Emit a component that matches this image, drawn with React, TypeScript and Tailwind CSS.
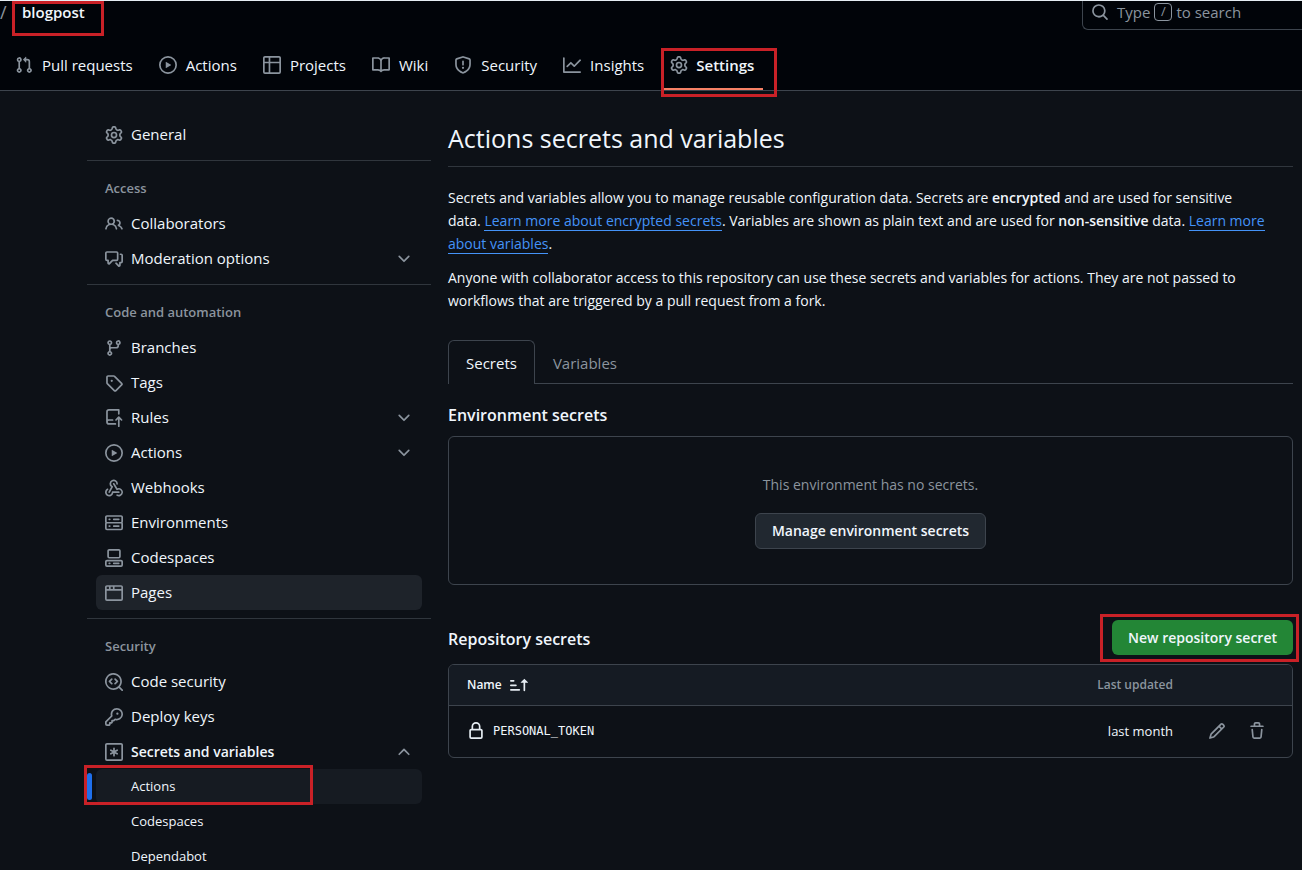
import React from 'react';

const icons = {
  pullRequest: 'M1.5 3.25a2.25 2.25 0 1 1 3 2.122v5.256a2.251 2.251 0 1 1-1.5 0V5.372A2.25 2.25 0 0 1 1.5 3.25Zm5.677-.177L9.573.677A.25.25 0 0 1 10 .854V2.5h1A2.5 2.5 0 0 1 13.5 5v5.628a2.251 2.251 0 1 1-1.5 0V5a1 1 0 0 0-1-1h-1v1.646a.25.25 0 0 1-.427.177L7.177 3.427a.25.25 0 0 1 0-.354ZM3.75 2.5a.75.75 0 1 0 0 1.5.75.75 0 0 0 0-1.5Zm0 9.5a.75.75 0 1 0 0 1.5.75.75 0 0 0 0-1.5Zm8.25.75a.75.75 0 1 0 1.5 0 .75.75 0 0 0-1.5 0Z',
  play: 'M8 0a8 8 0 1 1 0 16A8 8 0 0 1 8 0ZM1.5 8a6.5 6.5 0 1 0 13 0 6.5 6.5 0 0 0-13 0Zm4.879-2.773 4.264 2.559a.25.25 0 0 1 0 .428l-4.264 2.559A.25.25 0 0 1 6 10.559V5.442a.25.25 0 0 1 .379-.215Z',
  table: 'M0 1.75C0 .784.784 0 1.75 0h12.5C15.216 0 16 .784 16 1.75v12.5A1.75 1.75 0 0 1 14.25 16H1.75A1.75 1.75 0 0 1 0 14.25ZM6.5 6.5v8h7.75a.25.25 0 0 0 .25-.25V6.5Zm8-1.5V1.75a.25.25 0 0 0-.25-.25H6.5V5Zm-13 1.5v7.75c0 .138.112.25.25.25H5v-8ZM5 5V1.5H1.75a.25.25 0 0 0-.25.25V5Z',
  book: 'M0 1.75A.75.75 0 0 1 .75 1h4.253c1.227 0 2.317.59 3 1.501A3.743 3.743 0 0 1 11.006 1h4.245a.75.75 0 0 1 .75.75v10.5a.75.75 0 0 1-.75.75h-4.507a2.25 2.25 0 0 0-1.591.659l-.622.621a.75.75 0 0 1-1.06 0l-.622-.621A2.25 2.25 0 0 0 5.258 13H.75a.75.75 0 0 1-.75-.75Zm7.251 10.324.004-5.073-.002-2.253A2.25 2.25 0 0 0 5.003 2.5H1.5v9h3.757a3.75 3.75 0 0 1 1.994.574ZM8.755 4.75l-.004 7.322a3.752 3.752 0 0 1 1.992-.572H14.5v-9h-3.495a2.25 2.25 0 0 0-2.25 2.25Z',
  shield: 'M7.467.133a1.748 1.748 0 0 1 1.066 0l5.25 1.68A1.75 1.75 0 0 1 15 3.48V7c0 1.566-.32 3.182-1.303 4.682-.983 1.498-2.585 2.813-5.032 3.855a1.697 1.697 0 0 1-1.33 0c-2.447-1.042-4.049-2.357-5.032-3.855C1.32 10.182 1 8.566 1 7V3.48a1.75 1.75 0 0 1 1.217-1.667Zm.61 1.429a.25.25 0 0 0-.153 0l-5.25 1.68a.25.25 0 0 0-.174.238V7c0 1.358.275 2.666 1.057 3.86.784 1.194 2.121 2.34 4.366 3.297a.196.196 0 0 0 .154 0c2.245-.956 3.582-2.104 4.366-3.298C13.225 9.666 13.5 8.36 13.5 7V3.48a.251.251 0 0 0-.174-.237l-5.25-1.68ZM8.75 4.75v3a.75.75 0 0 1-1.5 0v-3a.75.75 0 0 1 1.5 0ZM9 10.5a1 1 0 1 1-2 0 1 1 0 0 1 2 0Z',
  graph: 'M1.5 1.75V13.5h13.75a.75.75 0 0 1 0 1.5H.75a.75.75 0 0 1-.75-.75V1.75a.75.75 0 0 1 1.5 0Zm14.28 2.53-5.25 5.25a.75.75 0 0 1-1.06 0L7 7.06 4.28 9.78a.751.751 0 0 1-1.042-.018.751.751 0 0 1-.018-1.042l3.25-3.25a.75.75 0 0 1 1.06 0L10 7.94l4.72-4.72a.751.751 0 0 1 1.042.018.751.751 0 0 1 .018 1.042Z',
  gear: 'M8 0a8.2 8.2 0 0 1 .701.031C9.444.095 9.99.645 10.16 1.29l.288 1.107c.018.066.079.158.212.224.231.114.454.243.668.386.123.082.233.09.299.071l1.103-.303c.644-.176 1.392.021 1.82.63.27.385.506.792.704 1.218.315.675.111 1.422-.364 1.891l-.814.806c-.049.048-.098.147-.088.294.016.257.016.515 0 .772-.01.147.038.246.088.294l.814.806c.475.469.679 1.216.364 1.891a7.977 7.977 0 0 1-.704 1.217c-.428.61-1.176.807-1.82.63l-1.102-.302c-.067-.019-.177-.011-.3.071a5.909 5.909 0 0 1-.668.386c-.133.066-.194.158-.211.224l-.29 1.106c-.168.646-.715 1.196-1.458 1.26a8.006 8.006 0 0 1-1.402 0c-.743-.064-1.289-.614-1.458-1.26l-.289-1.106c-.018-.066-.079-.158-.212-.224a5.738 5.738 0 0 1-.668-.386c-.123-.082-.233-.09-.299-.071l-1.103.303c-.644.176-1.392-.021-1.82-.63a8.12 8.12 0 0 1-.704-1.218c-.315-.675-.111-1.422.363-1.891l.815-.806c.05-.048.098-.147.088-.294a6.214 6.214 0 0 1 0-.772c.01-.147-.038-.246-.088-.294l-.815-.806C.635 6.045.431 5.298.746 4.623a7.92 7.92 0 0 1 .704-1.217c.428-.61 1.176-.807 1.82-.63l1.102.302c.067.019.177.011.3-.071.214-.143.437-.272.668-.386.133-.066.194-.158.211-.224l.29-1.106C6.009.645 6.556.095 7.299.03 7.53.01 7.764 0 8 0Zm-.571 1.525c-.036.003-.108.036-.137.146l-.289 1.105c-.147.561-.549.967-.998 1.189-.173.086-.34.183-.5.29-.417.278-.97.423-1.529.27l-1.103-.303c-.109-.03-.175.016-.195.045-.22.312-.412.644-.573.99-.014.031-.021.11.059.19l.815.806c.411.406.562.957.53 1.456a4.709 4.709 0 0 0 0 .582c.032.499-.119 1.05-.53 1.456l-.815.806c-.081.08-.073.159-.059.19.162.346.353.677.573.989.02.03.085.076.195.046l1.102-.303c.56-.153 1.113-.008 1.53.27.161.107.328.204.501.29.447.222.85.629.997 1.189l.289 1.105c.029.109.101.143.137.146a6.6 6.6 0 0 0 1.142 0c.036-.003.108-.036.137-.146l.289-1.105c.147-.561.549-.967.998-1.189.173-.086.34-.183.5-.29.417-.278.97-.423 1.529-.27l1.103.303c.109.029.175-.016.195-.045.22-.313.411-.644.573-.99.014-.031.021-.11-.059-.19l-.815-.806c-.411-.406-.562-.957-.53-1.456a4.709 4.709 0 0 0 0-.582c-.032-.499.119-1.05.53-1.456l.815-.806c.081-.08.073-.159.059-.19a6.464 6.464 0 0 0-.573-.989c-.02-.03-.085-.076-.195-.046l-1.102.303c-.56.153-1.113.008-1.53-.27a4.44 4.44 0 0 0-.501-.29c-.447-.222-.85-.629-.997-1.189l-.289-1.105c-.029-.11-.101-.143-.137-.146a6.6 6.6 0 0 0-1.142 0ZM11 8a3 3 0 1 1-6 0 3 3 0 0 1 6 0ZM9.5 8a1.5 1.5 0 1 0-3.001.001A1.5 1.5 0 0 0 9.5 8Z',
  people: 'M2 5.5a3.5 3.5 0 1 1 5.898 2.549 5.508 5.508 0 0 1 3.034 4.084.75.75 0 1 1-1.482.235 4 4 0 0 0-7.9 0 .75.75 0 0 1-1.482-.236A5.507 5.507 0 0 1 3.102 8.05 3.493 3.493 0 0 1 2 5.5ZM11 4a3.001 3.001 0 0 1 2.22 5.018 5.01 5.01 0 0 1 2.56 3.012.749.749 0 0 1-.885.954.752.752 0 0 1-.549-.514 3.507 3.507 0 0 0-2.522-2.372.75.75 0 0 1-.574-.73v-.352a.75.75 0 0 1 .416-.672A1.5 1.5 0 0 0 11 5.5.75.75 0 0 1 11 4Zm-5.5-.5a2 2 0 1 0-.001 3.999A2 2 0 0 0 5.5 3.5Z',
  discussion: 'M1.75 1h8.5c.966 0 1.75.784 1.75 1.75v5.5A1.75 1.75 0 0 1 10.25 10H7.061l-2.574 2.573A1.458 1.458 0 0 1 2 11.543V10h-.25A1.75 1.75 0 0 1 0 8.25v-5.5C0 1.784.784 1 1.75 1ZM1.5 2.75v5.5c0 .138.112.25.25.25h1a.75.75 0 0 1 .75.75v2.19l2.72-2.72a.749.749 0 0 1 .53-.22h3.5a.25.25 0 0 0 .25-.25v-5.5a.25.25 0 0 0-.25-.25h-8.5a.25.25 0 0 0-.25.25Zm13 2a.25.25 0 0 0-.25-.25h-.5a.75.75 0 0 1 0-1.5h.5c.966 0 1.75.784 1.75 1.75v5.5A1.75 1.75 0 0 1 14.25 12H14v1.543a1.458 1.458 0 0 1-2.487 1.03L9.22 12.28a.749.749 0 0 1 .326-1.275.749.749 0 0 1 .734.215l2.22 2.22v-2.19a.75.75 0 0 1 .75-.75h1a.25.25 0 0 0 .25-.25Z',
  branch: 'M9.5 3.25a2.25 2.25 0 1 1 3 2.122V6A2.5 2.5 0 0 1 10 8.5H6a1 1 0 0 0-1 1v1.128a2.251 2.251 0 1 1-1.5 0V5.372a2.25 2.25 0 1 1 1.5 0v1.836A2.493 2.493 0 0 1 6 7h4a1 1 0 0 0 1-1v-.628A2.25 2.25 0 0 1 9.5 3.25Zm-6 0a.75.75 0 1 0 1.5 0 .75.75 0 0 0-1.5 0Zm8.25-.75a.75.75 0 1 0 0 1.5.75.75 0 0 0 0-1.5ZM4.25 12a.75.75 0 1 0 0 1.5.75.75 0 0 0 0-1.5Z',
  tag: 'M1 7.775V2.75C1 1.784 1.784 1 2.75 1h5.025c.464 0 .91.184 1.238.513l6.25 6.25a1.75 1.75 0 0 1 0 2.474l-5.026 5.026a1.75 1.75 0 0 1-2.474 0l-6.25-6.25A1.752 1.752 0 0 1 1 7.775Zm1.5 0c0 .066.026.13.073.177l6.25 6.25a.25.25 0 0 0 .354 0l5.025-5.025a.25.25 0 0 0 0-.354l-6.25-6.25a.25.25 0 0 0-.177-.073H2.75a.25.25 0 0 0-.25.25ZM6 5a1 1 0 1 1 0 2 1 1 0 0 1 0-2Z',
  rules: 'M1 2.5A2.5 2.5 0 0 1 3.5 0h8.75a.75.75 0 0 1 .75.75v3.5a.75.75 0 0 1-1.5 0V1.5h-8a1 1 0 0 0-1 1v6.708A2.493 2.493 0 0 1 3.5 9h3.25a.75.75 0 0 1 0 1.5H3.5a1 1 0 0 0 0 2h5.75a.75.75 0 0 1 0 1.5H3.5A2.5 2.5 0 0 1 1 11.5Zm13.23 7.79h-.001l-1.224-1.224v6.184a.75.75 0 0 1-1.5 0V9.066L10.28 10.29a.75.75 0 0 1-1.06-1.061l2.505-2.504a.75.75 0 0 1 1.06 0L15.29 9.23a.751.751 0 0 1-.018 1.042.751.751 0 0 1-1.042.018Z',
  webhook: 'M5.5 4.25a2.25 2.25 0 0 1 4.5 0 .75.75 0 0 0 1.5 0 3.75 3.75 0 1 0-6.14 2.889l-2.272 4.258a.75.75 0 0 0 1.324.706L7 7.25a.75.75 0 0 0-.309-1.015A2.25 2.25 0 0 1 5.5 4.25ZM7.364 3.607a.75.75 0 0 1 1.03.257l2.608 4.349a3.75 3.75 0 1 1-.628 6.785.75.75 0 0 1 .752-1.299 2.25 2.25 0 1 0-.033-3.88.75.75 0 0 1-1.03-.256L7.107 4.636a.75.75 0 0 1 .257-1.03ZM2.9 8.776A.75.75 0 0 1 2.625 9.8 2.25 2.25 0 1 0 6 11.75a.75.75 0 0 1 .75-.751h5.5a.75.75 0 0 1 0 1.5H7.425a3.751 3.751 0 1 1-5.55-3.998.75.75 0 0 1 1.024.274Z',
  server: 'M1.75 1h12.5c.966 0 1.75.784 1.75 1.75v4c0 .372-.116.717-.314 1 .198.283.314.628.314 1v4a1.75 1.75 0 0 1-1.75 1.75H1.75A1.75 1.75 0 0 1 0 12.75v-4c0-.358.109-.707.314-1a1.739 1.739 0 0 1-.314-1v-4C0 1.784.784 1 1.75 1ZM1.5 2.75v4c0 .138.112.25.25.25h12.5a.25.25 0 0 0 .25-.25v-4a.25.25 0 0 0-.25-.25H1.75a.25.25 0 0 0-.25.25Zm.25 5.75a.25.25 0 0 0-.25.25v4c0 .138.112.25.25.25h12.5a.25.25 0 0 0 .25-.25v-4a.25.25 0 0 0-.25-.25ZM7 4.75A.75.75 0 0 1 7.75 4h4.5a.75.75 0 0 1 0 1.5h-4.5A.75.75 0 0 1 7 4.75ZM7.75 10h4.5a.75.75 0 0 1 0 1.5h-4.5a.75.75 0 0 1 0-1.5ZM3 4.75A.75.75 0 0 1 3.75 4h.5a.75.75 0 0 1 0 1.5h-.5A.75.75 0 0 1 3 4.75ZM3.75 10h.5a.75.75 0 0 1 0 1.5h-.5a.75.75 0 0 1 0-1.5Z',
  codespaces: 'M0 11.25c0-.966.784-1.75 1.75-1.75h12.5c.966 0 1.75.784 1.75 1.75v3A1.75 1.75 0 0 1 14.25 16H1.75A1.75 1.75 0 0 1 0 14.25Zm2-9.5C2 .784 2.784 0 3.75 0h8.5C13.216 0 14 .784 14 1.75v5a1.75 1.75 0 0 1-1.75 1.75h-8.5A1.75 1.75 0 0 1 2 6.75Zm1.75-.25a.25.25 0 0 0-.25.25v5c0 .138.112.25.25.25h8.5a.25.25 0 0 0 .25-.25v-5a.25.25 0 0 0-.25-.25Zm-2 9.5a.25.25 0 0 0-.25.25v3c0 .138.112.25.25.25h12.5a.25.25 0 0 0 .25-.25v-3a.25.25 0 0 0-.25-.25ZM7 12.75a.75.75 0 0 1 .75-.75h4.5a.75.75 0 0 1 0 1.5h-4.5a.75.75 0 0 1-.75-.75Zm-4 0a.75.75 0 0 1 .75-.75h.5a.75.75 0 0 1 0 1.5h-.5a.75.75 0 0 1-.75-.75Z',
  browser: 'M0 2.75C0 1.784.784 1 1.75 1h12.5c.966 0 1.75.784 1.75 1.75v10.5A1.75 1.75 0 0 1 14.25 15H1.75A1.75 1.75 0 0 1 0 13.25ZM14.5 6h-13v7.25c0 .138.112.25.25.25h12.5a.25.25 0 0 0 .25-.25Zm-6-3.5v2h6V2.75a.25.25 0 0 0-.25-.25ZM5 2.5v2h2v-2Zm-3.25 0a.25.25 0 0 0-.25.25V4.5h2v-2Z',
  codescan: 'M8.47 4.97a.75.75 0 0 0 0 1.06L9.94 7.5 8.47 8.97a.75.75 0 1 0 1.06 1.06l2-2a.75.75 0 0 0 0-1.06l-2-2a.75.75 0 0 0-1.06 0ZM6.53 6.03a.75.75 0 0 0-1.06-1.06l-2 2a.75.75 0 0 0 0 1.06l2 2a.75.75 0 1 0 1.06-1.06L5.06 7.5l1.47-1.47ZM12.246 13.307a7.501 7.501 0 1 1 1.06-1.06l2.474 2.473a.749.749 0 0 1-.326 1.275.749.749 0 0 1-.734-.215ZM1.5 7.5a6.002 6.002 0 0 0 3.608 5.504 6.002 6.002 0 0 0 6.486-1.117.748.748 0 0 1 .292-.293A6 6 0 1 0 1.5 7.5Z',
  key: 'M10.5 0a5.499 5.499 0 1 1-1.288 10.848l-.932.932a.749.749 0 0 1-.53.22H7v.75a.749.749 0 0 1-.22.53l-.5.5a.749.749 0 0 1-.53.22H5v.75a.749.749 0 0 1-.22.53l-.5.5a.749.749 0 0 1-.53.22h-2A1.75 1.75 0 0 1 0 14.25v-2c0-.199.079-.389.22-.53l4.932-4.932A5.5 5.5 0 0 1 10.5 0Zm-4 5.5c-.001.431.069.86.205 1.269a.75.75 0 0 1-.181.768L1.5 12.56v1.69c0 .138.112.25.25.25h1.69l.06-.06v-1.19a.75.75 0 0 1 .75-.75h1.19l.06-.06v-1.19a.75.75 0 0 1 .75-.75h1.19l1.023-1.025a.75.75 0 0 1 .768-.18A4 4 0 1 0 6.5 5.5ZM11 6a1 1 0 1 1 0-2 1 1 0 0 1 0 2Z',
  asterisk: 'M0 1.75C0 .784.784 0 1.75 0h12.5C15.216 0 16 .784 16 1.75v12.5A1.75 1.75 0 0 1 14.25 16H1.75A1.75 1.75 0 0 1 0 14.25Zm1.75-.25a.25.25 0 0 0-.25.25v12.5c0 .138.112.25.25.25h12.5a.25.25 0 0 0 .25-.25V1.75a.25.25 0 0 0-.25-.25ZM8 4a.75.75 0 0 1 .75.75V6.7l1.69-.975a.75.75 0 0 1 .75 1.3L9.5 8l1.69.975a.75.75 0 0 1-.75 1.3L8.75 9.3v1.95a.75.75 0 0 1-1.5 0V9.3l-1.69.975a.75.75 0 0 1-.75-1.3L6.5 8l-1.69-.975a.75.75 0 0 1 .75-1.3l1.69.975V4.75A.75.75 0 0 1 8 4Z',
  chevronDown: 'M12.78 5.22a.749.749 0 0 1 0 1.06l-4.25 4.25a.749.749 0 0 1-1.06 0L3.22 6.28a.749.749 0 1 1 1.06-1.06L8 8.939l3.72-3.719a.749.749 0 0 1 1.06 0Z',
  chevronUp: 'M3.22 10.53a.749.749 0 0 1 0-1.06l4.25-4.25a.749.749 0 0 1 1.06 0l4.25 4.25a.749.749 0 1 1-1.06 1.06L8 6.811 4.28 10.53a.749.749 0 0 1-1.06 0Z',
  sortAsc: 'm12.927 2.573 3 3A.25.25 0 0 1 15.75 6H13.5v6.75a.75.75 0 0 1-1.5 0V6H9.75a.25.25 0 0 1-.177-.427l3-3a.25.25 0 0 1 .354 0ZM0 12.25a.75.75 0 0 1 .75-.75h7.5a.75.75 0 0 1 0 1.5H.75a.75.75 0 0 1-.75-.75Zm0-4a.75.75 0 0 1 .75-.75h4.5a.75.75 0 0 1 0 1.5H.75A.75.75 0 0 1 0 8.25Zm0-4a.75.75 0 0 1 .75-.75h2.5a.75.75 0 0 1 0 1.5H.75A.75.75 0 0 1 0 4.25Z',
  lock: 'M4 4a4 4 0 0 1 8 0v2h.25c.966 0 1.75.784 1.75 1.75v5.5A1.75 1.75 0 0 1 12.25 15h-8.5A1.75 1.75 0 0 1 2 13.25v-5.5C2 6.784 2.784 6 3.75 6H4Zm8.25 3.5h-8.5a.25.25 0 0 0-.25.25v5.5c0 .138.112.25.25.25h8.5a.25.25 0 0 0 .25-.25v-5.5a.25.25 0 0 0-.25-.25ZM10.5 6V4a2.5 2.5 0 1 0-5 0v2Z',
  pencil: 'M11.013 1.427a1.75 1.75 0 0 1 2.474 0l1.086 1.086a1.75 1.75 0 0 1 0 2.474l-8.61 8.61c-.21.21-.47.364-.756.445l-3.251.93a.75.75 0 0 1-.927-.928l.929-3.25c.081-.286.235-.547.445-.758l8.61-8.61Zm.176 4.823L9.75 4.81l-6.286 6.287a.253.253 0 0 0-.064.108l-.558 1.953 1.953-.558a.253.253 0 0 0 .108-.064Zm1.238-3.763a.25.25 0 0 0-.354 0L10.811 3.75l1.439 1.44 1.263-1.263a.25.25 0 0 0 0-.354Z',
  trash: 'M11 1.75V3h2.25a.75.75 0 0 1 0 1.5H2.75a.75.75 0 0 1 0-1.5H5V1.75C5 .784 5.784 0 6.75 0h2.5C10.216 0 11 .784 11 1.75ZM4.496 6.675l.66 6.6a.25.25 0 0 0 .249.225h5.19a.25.25 0 0 0 .249-.225l.66-6.6a.75.75 0 0 1 1.492.149l-.66 6.6A1.748 1.748 0 0 1 10.595 15h-5.19a1.75 1.75 0 0 1-1.741-1.575l-.66-6.6a.75.75 0 1 1 1.492-.15ZM6.5 1.75V3h3V1.75a.25.25 0 0 0-.25-.25h-2.5a.25.25 0 0 0-.25.25Z',
  search: 'M10.68 11.74a6 6 0 0 1-7.922-8.982 6 6 0 0 1 8.982 7.922l3.04 3.04a.749.749 0 0 1-.326 1.275.749.749 0 0 1-.734-.215ZM11.5 7a4.499 4.499 0 1 0-8.997 0A4.499 4.499 0 0 0 11.5 7Z'
};

type IconName = keyof typeof icons;

const Icon: React.FC<{ name: IconName; className?: string }> = ({ name, className = 'text-[#8b949e]' }) => (
  <svg viewBox="0 0 16 16" fill="currentColor" aria-hidden="true" className={`w-[18px] h-[18px] shrink-0 ${className}`}>
    <path d={icons[name]} />
  </svg>
);

// Red frame laid over the control it points out
const Highlight: React.FC<{ className: string }> = ({ className }) => (
  <span className={`absolute border-3 border-[#c92127] pointer-events-none ${className}`} />
);

interface NavItem {
  label: string;
  icon: IconName;
  chevron?: 'chevronDown' | 'chevronUp';
  hovered?: boolean;
  bold?: boolean;
}

const tabs: NavItem[] = [
  { label: 'Pull requests', icon: 'pullRequest' },
  { label: 'Actions', icon: 'play' },
  { label: 'Projects', icon: 'table' },
  { label: 'Wiki', icon: 'book' },
  { label: 'Security', icon: 'shield' },
  { label: 'Insights', icon: 'graph' }
];

const groups: { title?: string; items: NavItem[] }[] = [
  { items: [{ label: 'General', icon: 'gear' }] },
  {
    title: 'Access',
    items: [
      { label: 'Collaborators', icon: 'people' },
      { label: 'Moderation options', icon: 'discussion', chevron: 'chevronDown' }
    ]
  },
  {
    title: 'Code and automation',
    items: [
      { label: 'Branches', icon: 'branch' },
      { label: 'Tags', icon: 'tag' },
      { label: 'Rules', icon: 'rules', chevron: 'chevronDown' },
      { label: 'Actions', icon: 'play', chevron: 'chevronDown' },
      { label: 'Webhooks', icon: 'webhook' },
      { label: 'Environments', icon: 'server' },
      { label: 'Codespaces', icon: 'codespaces' },
      { label: 'Pages', icon: 'browser', hovered: true }
    ]
  },
  {
    title: 'Security',
    items: [
      { label: 'Code security', icon: 'codescan' },
      { label: 'Deploy keys', icon: 'key' },
      { label: 'Secrets and variables', icon: 'asterisk', chevron: 'chevronUp', bold: true }
    ]
  }
];

const Header: React.FC = () => (
  <header className="bg-[#010409] border-t border-t-[#e6edf3] border-b border-b-[#3d444d]">
    <div className="flex justify-between h-[42px]">
      <div className="flex items-start leading-[22px]">
        <span className="w-3 text-lg leading-[22px] text-[#8b949e]">/</span>
        <a href="#repo" className="relative pl-[10px] font-semibold">
          blogpost
          <Highlight className="left-0 top-0 w-[92px] h-[35px]" />
        </a>
      </div>
      <button type="button" className="flex items-center h-[29px] w-[220px] pl-2 pb-2 pt-0.5 border-l border-b border-[#3d444d] rounded-bl-md text-[#8b949e]">
        <Icon name="search" />
        <span className="pl-2 flex items-center gap-1">
          Type
          <kbd className="flex items-center justify-center w-[18px] h-[18px] border border-[#8b949e] rounded-sm text-[13px] font-[inherit]">/</kbd>
          to search
        </span>
      </button>
    </div>
    <nav aria-label="Repository" className="flex h-[47px] pl-[6px]">
      {tabs.map((tab) => (
        <a key={tab.label} href="#tab" className="flex items-center gap-[9px] h-[44px] px-[9px] mr-2">
          <Icon name={tab.icon} />
          {tab.label}
        </a>
      ))}
      <a href="#settings" aria-current="page" className="relative flex items-center gap-2 h-[47px] pb-[3px] px-[9px] font-semibold">
        <Icon name="gear" />
        Settings
        <span className="absolute inset-x-0 bottom-0 h-[2px] bg-[#f78166]" />
        <Highlight className="left-0 -right-[14px] top-[5px] h-[49px]" />
      </a>
    </nav>
  </header>
);

const Sidebar: React.FC = () => (
  <nav aria-label="Settings" className="w-[344px] shrink-0 pt-[26px]">
    {groups.map((group, index) => (
      <section key={index} className={index < groups.length - 1 ? 'pb-2 border-b border-[#30363d]' : ''}>
        {group.title && (
          <h3 className="h-[45px] pt-[17px] px-[18px] text-[13px] leading-5 font-semibold text-[#8b949e]">{group.title}</h3>
        )}
        {group.items.map((item) => (
          <a
            key={item.label}
            href="#section"
            className={`flex items-center gap-2 h-[35px] mx-[9px] px-[9px] rounded-md ${item.hovered ? 'bg-[#1e232a]' : ''} ${item.bold ? 'text-sm font-semibold' : ''}`}
          >
            <Icon name={item.icon} />
            <span className="flex-1">{item.label}</span>
            {item.chevron && <Icon name={item.chevron} />}
          </a>
        ))}
      </section>
    ))}
    <div className="text-[13px]">
      <a href="#actions" aria-current="page" className="relative flex items-center h-[35px] mx-[9px] pl-[35px] rounded-md bg-[#161b22]">
        <span className="absolute -left-[9px] top-1 w-[5px] h-[27px] rounded-md bg-[#1f6feb]" />
        Actions
        <Highlight className="-left-3 -top-1 w-[229px] h-10" />
      </a>
      <a href="#codespaces" className="flex items-center h-[35px] mx-[9px] pl-[35px] rounded-md">Codespaces</a>
      <a href="#dependabot" className="flex items-center h-[35px] mx-[9px] pl-[35px] rounded-md">Dependabot</a>
    </div>
  </nav>
);

const SecretsTable: React.FC = () => (
  <div className="mt-[9px] border border-[#3d444d] rounded-md overflow-hidden">
    <table className="w-full text-[13px]">
      <thead>
        <tr className="h-10 bg-[#151b23] border-b border-[#3d444d] text-xs">
          <th scope="col" className="pl-[18px] text-left font-semibold">
            <span className="flex items-center gap-2">
              Name
              <Icon name="sortAsc" className="text-[#e6edf3]" />
            </span>
          </th>
          <th scope="col" className="text-right font-semibold text-[#8b949e]">Last updated</th>
          <th className="w-[119px]"></th>
        </tr>
      </thead>
      <tbody>
        <tr className="h-[52px]">
          <td className="pl-[18px]">
            <span className="flex items-center gap-2">
              <Icon name="lock" className="text-[#e6edf3]" />
              <code className="text-xs font-['DejaVu_Sans_Mono',monospace]">PERSONAL_TOKEN</code>
            </span>
          </td>
          <td className="text-right">last month</td>
          <td>
            <span className="flex justify-end gap-[22px] pr-[26px]">
              <button type="button" aria-label="Edit secret"><Icon name="pencil" /></button>
              <button type="button" aria-label="Delete secret"><Icon name="trash" /></button>
            </span>
          </td>
        </tr>
      </tbody>
    </table>
  </div>
);

const App: React.FC = () => {
  const link = 'text-[#4493f8] border-b border-[#4493f8]';

  return (
    <div className="min-h-screen bg-[#0d1117] text-[#f0f6fc] text-[15px] font-['Open_Sans','Noto_Sans',sans-serif]">
      <Header />
      <div className="flex gap-[17px] pl-[87px] pr-[9px]">
        <Sidebar />
        <main className="flex-1 min-w-0 pt-[28px]">
          <h1 className="pb-2 border-b border-[#30363d] text-[25px] leading-[39px]">Actions secrets and variables</h1>
          <div className="pt-[19px] space-y-[11px] text-sm leading-[23px]">
            <p>
              Secrets and variables allow you to manage reusable configuration data. Secrets are <strong className="font-semibold">encrypted</strong> and
              are used for sensitive<br />
              data. <a href="#secrets" className={link}>Learn more about encrypted secrets</a>. Variables are shown as plain text
              and are used for <strong className="font-semibold">non-sensitive</strong> data. <a href="#variables" className={link}>Learn more<br />about variables</a>.
            </p>
            <p>
              Anyone with collaborator access to this repository can use these secrets and variables for actions. They are not passed to<br />
              workflows that are triggered by a pull request from a fork.
            </p>
          </div>

          <div role="tablist" className="flex mt-[28px] border-b border-[#3d444d]">
            <button type="button" role="tab" aria-selected="true" className="h-11 -mb-px px-[17px] pt-0.5 border border-b-0 border-[#3d444d] rounded-t-md bg-[#0d1117]">
              Secrets
            </button>
            <button type="button" role="tab" aria-selected="false" className="h-11 -mb-px px-[18px] pt-0.5 text-[#8b949e]">Variables</button>
          </div>

          <h2 className="mt-[18px] text-base leading-[26px] font-semibold">Environment secrets</h2>
          <div className="flex flex-col items-center mt-2 h-[149px] pt-[37px] border border-[#3d444d] rounded-md text-sm">
            <p className="leading-[22px] text-[#8b949e]">This environment has no secrets.</p>
            <button type="button" className="mt-[17px] h-9 px-4 border border-[#3d444d] rounded-md bg-[#212830] font-semibold">
              Manage environment secrets
            </button>
          </div>

          <div className="flex items-center justify-between mt-[35px]">
            <h2 className="pt-0.5 text-base font-semibold">Repository secrets</h2>
            <div className="relative">
              <button type="button" className="h-[35px] px-4 rounded-md bg-[#238636] text-sm font-semibold">New repository secret</button>
              <Highlight className="-left-3 -right-[6px] -top-[6px] h-12" />
            </div>
          </div>
          <SecretsTable />
        </main>
      </div>
    </div>
  );
};

export default App;
